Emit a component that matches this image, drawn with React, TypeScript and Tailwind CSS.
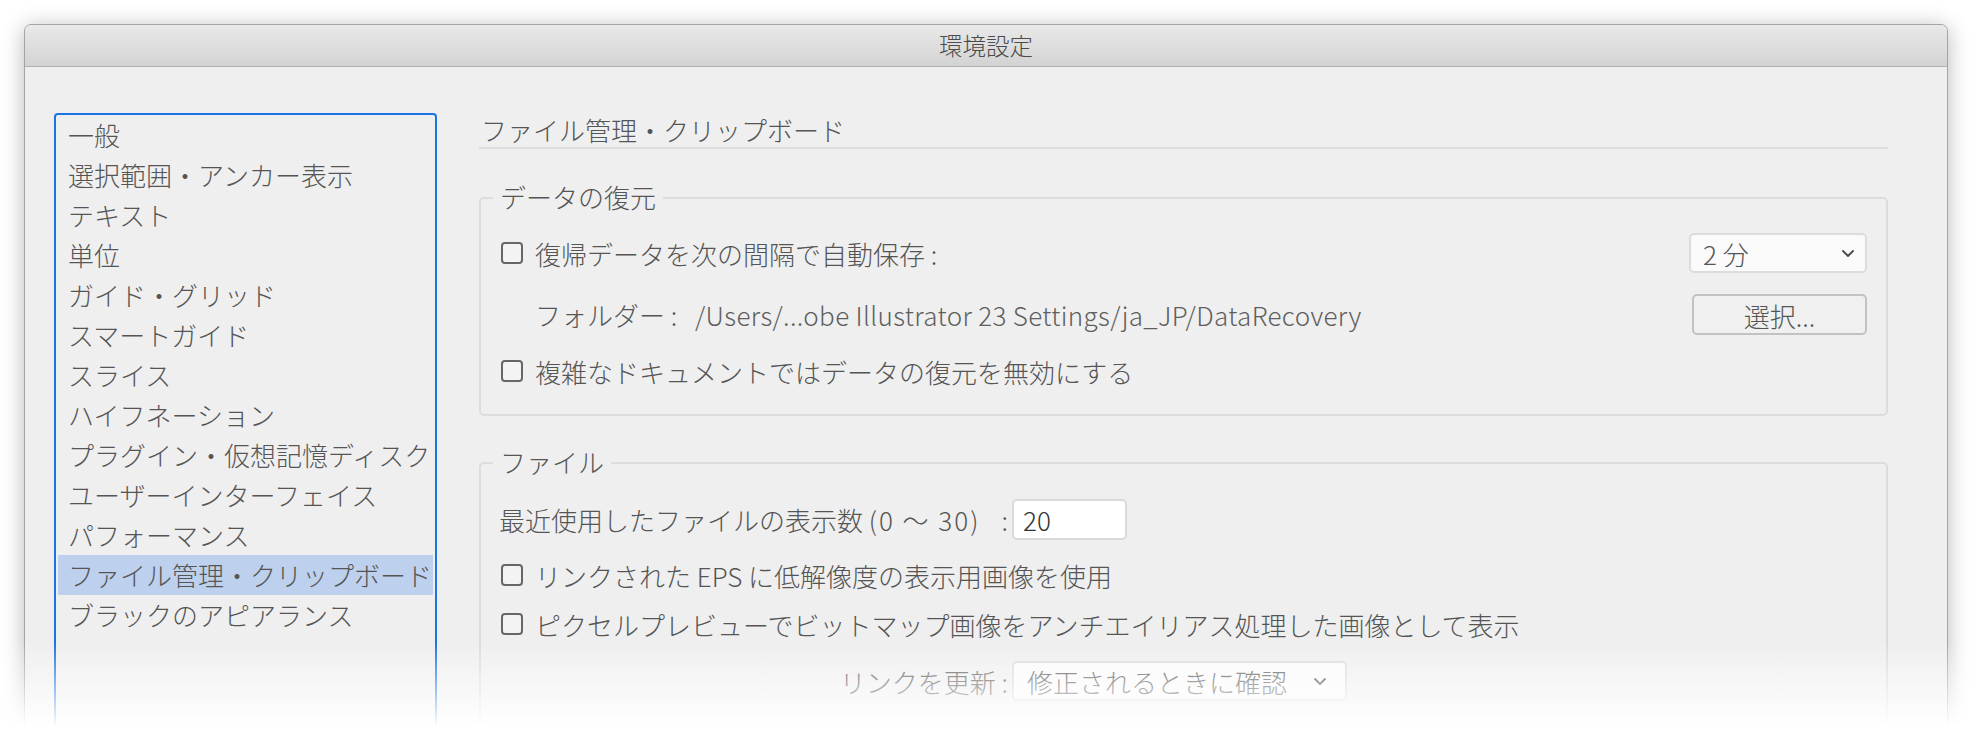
import type { ReactNode } from 'react'

const FONT = '[font-family:"Noto_Sans_CJK_JP","Noto_Sans",sans-serif]'

const categories = [
  '一般',
  '選択範囲・アンカー表示',
  'テキスト',
  '単位',
  'ガイド・グリッド',
  'スマートガイド',
  'スライス',
  'ハイフネーション',
  'プラグイン・仮想記憶ディスク',
  'ユーザーインターフェイス',
  'パフォーマンス',
  'ファイル管理・クリップボード',
  'ブラックのアピアランス',
]

function Chevron(): JSX.Element {
  return (
    <svg width="14" height="9" viewBox="0 0 14 9" fill="none">
      <polyline points="2,2 7,7 12,2" stroke="#4a4a4a" strokeWidth="1.8" strokeLinecap="round" strokeLinejoin="round" />
    </svg>
  )
}

function Checkbox(): JSX.Element {
  return <span className="block h-[22px] w-[22px] shrink-0 rounded-[4px] border-2 border-[#666] bg-[#f3f3f3]" />
}

function Group({ title, children, className }: { title: string; children: ReactNode; className: string }): JSX.Element {
  return (
    <div className={`relative rounded-[5px] border-2 border-[#dcdcdc] ${className}`}>
      <span className="absolute -top-[19px] left-[12px] bg-[#efefef] px-[7px] leading-[34px]">{title}</span>
      {children}
    </div>
  )
}

export default function App(): JSX.Element {
  return (
    <div className={`relative h-[737px] w-[1972px] overflow-hidden bg-white pl-[24px] pt-[24px] text-[26px] font-light text-[#555] ${FONT}`}>
      {/* Window */}
      <div className="flex h-[800px] w-[1924px] flex-col rounded-t-[7px] border border-[#a4a4a4] bg-[#efefef] shadow-[0_3px_22px_rgba(0,0,0,0.28)]">
        {/* Title bar */}
        <div className="flex h-[42px] shrink-0 items-center justify-center rounded-t-[6px] border-b border-[#b3b3b3] bg-gradient-to-b from-[#e9e9e9] to-[#d3d3d3] text-[23.5px] text-[#4b4b4b]">
          環境設定
        </div>

        <div className="flex flex-1 pl-[29px] pr-[59px] pt-[46px]">
          {/* Category list */}
          <div className="h-[700px] w-[383px] shrink-0 rounded-[4px] border-2 border-[#1c74e4] px-[2px]">
            {categories.map((name) => (
              <div
                key={name}
                className={`h-[40px] whitespace-nowrap pl-[10px] leading-[39px] ${
                  name === 'ファイル管理・クリップボード' ? 'bg-[#bdd0ed]' : ''
                }`}
              >
                {name}
              </div>
            ))}
          </div>

          {/* Panel */}
          <div className="ml-[42px] flex-1">
            <div className="h-[36px] border-b-2 border-[#dedede] pl-[2px] leading-[33px]">ファイル管理・クリップボード</div>

            <Group title="データの復元" className="mt-[48px] pb-[26px] pl-[20px] pr-[19px] pt-[34px]">
              <div className="flex h-[40px] items-center">
                <Checkbox />
                <span className="ml-[12px]">復帰データを次の間隔で自動保存 :</span>
                <div className="ml-auto flex h-[40px] w-[178px] items-center justify-between rounded-[5px] border-2 border-[#dcdcdc] bg-[#fafafa] pl-[12px] pr-[10px]">
                  <span>2 分</span>
                  <Chevron />
                </div>
              </div>
              <div className="mt-[21px] flex h-[41px] items-center">
                <span className="ml-[34px] w-[160px] shrink-0">フォルダー :</span>
                <span className="tracking-[0.35px] text-[#5e5e5e]">/Users/...obe Illustrator 23 Settings/ja_JP/DataRecovery</span>
                <button
                  type="button"
                  className="ml-auto h-[41px] w-[175px] rounded-[5px] border-2 border-[#c2c2c2] bg-[#f0f0f0] text-[#555]"
                >
                  選択...
                </button>
              </div>
              <div className="mt-[19px] flex h-[34px] items-center">
                <Checkbox />
                <span className="ml-[12px]">複雑なドキュメントではデータの復元を無効にする</span>
              </div>
            </Group>

            <Group title="ファイル" className="mt-[46px] pb-[60px] pl-[18px] pr-[19px] pt-[35px]">
              <div className="grid h-[41px] grid-cols-[513px_auto] items-center">
                <span className="flex justify-between whitespace-nowrap pr-[4px]">
                  <span>
                    最近使用したファイルの表示数 <span className="tracking-[2px]">(0 〜 30)</span>
                  </span>
                  <span>:</span>
                </span>
                <div className="flex h-[41px] w-[115px] items-center rounded-[5px] border-2 border-[#dadada] bg-white pl-[9px] text-[#333]">
                  20
                </div>
              </div>
              <div className="mt-[18px] flex h-[34px] items-center pl-[2px]">
                <Checkbox />
                <span className="ml-[12px]">リンクされた EPS に低解像度の表示用画像を使用</span>
              </div>
              <div className="mt-[15px] flex h-[34px] items-center pl-[2px]">
                <Checkbox />
                <span className="ml-[12px]">ピクセルプレビューでビットマップ画像をアンチエイリアス処理した画像として表示</span>
              </div>
              <div className="mt-[20px] grid h-[40px] grid-cols-[513px_auto] items-center">
                <span className="pr-[4px] text-right">リンクを更新 :</span>
                <div className="flex h-[40px] w-[335px] items-center justify-between rounded-[5px] border-2 border-[#dcdcdc] bg-[#fafafa] pl-[13px] pr-[18px]">
                  <span>修正されるときに確認</span>
                  <Chevron />
                </div>
              </div>
            </Group>
          </div>
        </div>
      </div>

      {/* Bottom fade of the screenshot */}
      <div className="pointer-events-none absolute inset-x-0 bottom-0 h-[95px] bg-gradient-to-b from-white/0 to-white to-90%" />
    </div>
  )
}
